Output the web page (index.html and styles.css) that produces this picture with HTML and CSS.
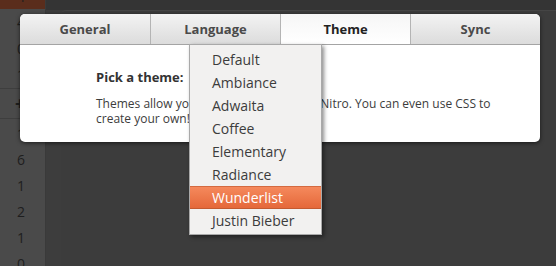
FILE: index.html
```html
<!DOCTYPE html>
<html lang="en">
<head>
    <meta charset="UTF-8">
    <title>Nitro - Settings</title>
    <link rel="stylesheet" href="styles.css">
</head>
<body>
<div class="sidebar">
    <div class="group first">
        <div class="count">4</div>
        <div class="count">4</div>
        <div class="count">0</div>
        <div class="count">1</div>
    </div>
    <div class="add">+</div>
    <div class="group">
        <div class="count">1</div>
        <div class="count">6</div>
        <div class="count">1</div>
        <div class="count">2</div>
        <div class="count">1</div>
        <div class="count">0</div>
    </div>
</div>
<div class="main">
    <div class="toolbar"></div>
    <div class="panel"></div>
</div>

<div class="dialog">
    <div class="tabs">
        <button>General</button>
        <button>Language</button>
        <button class="active">Theme</button>
        <button>Sync</button>
    </div>
    <div class="dialog-body">
        <h3>Pick a theme:</h3>
        <p>Themes allow you to change the look of Nitro. You can even use CSS to create your own!</p>
    </div>
</div>

<ul class="menu">
    <li>Default</li>
    <li>Ambiance</li>
    <li>Adwaita</li>
    <li>Coffee</li>
    <li>Elementary</li>
    <li>Radiance</li>
    <li class="selected">Wunderlist</li>
    <li>Justin Bieber</li>
</ul>
</body>
</html>
```

FILE: styles.css
```css
body {
    margin: 0;
    width: 556px;
    height: 266px;
    overflow: hidden;
    display: flex;
    background-color: #3d3d3d;
    font-family: "Open Sans", "DejaVu Sans", sans-serif;
    color: #3c3c3c;
}
.sidebar {
    width: 45px;
    flex-shrink: 0;
    background: linear-gradient(#5a2d1c 0, #5a2d1c 9px, #4a4a4a 9px);
    border-right: 1px solid #3a3a3a;
    overflow: hidden;
}
.group {
    padding-top: 2px;
}
.group.first {
    margin-top: -16px;
    padding-top: 0;
}
.count {
    height: 26px;
    line-height: 26px;
    padding-left: 17px;
    font-size: 14px;
    color: #1e1e1e;
}
.add {
    height: 29px;
    line-height: 29px;
    padding-left: 15px;
    font-size: 17px;
    font-weight: bold;
    color: #1e1e1e;
    border-top: 1px solid #3e3e3e;
    border-bottom: 1px solid #3e3e3e;
}
.main {
    flex: 1;
    display: flex;
    flex-direction: column;
}
.toolbar {
    height: 10px;
    background-color: #343434;
}
.panel {
    flex: 1;
    margin-left: 15px;
    background-color: #3c3c3c;
    border-top-left-radius: 5px;
    border-top: 1px solid #454545;
}
.dialog {
    position: absolute;
    top: 14px;
    left: 20px;
    width: 520px;
    height: 128px;
    background-color: #FFFFFF;
    border-radius: 5px;
    box-shadow: 0 1px 4px rgba(0, 0, 0, 0.6);
    overflow: hidden;
}
.tabs {
    display: grid;
    grid-template-columns: repeat(4, 1fr);
    height: 30px;
    border-bottom: 1px solid #a4a4a4;
}
.tabs button {
    margin: 0;
    border: none;
    border-left: 1px solid #b4b4b4;
    background: linear-gradient(#f3f3f3, #dcdcdc);
    font-family: inherit;
    font-size: 13px;
    font-weight: bold;
    color: #4a4a4a;
    padding: 0;
}
.tabs button:first-child {
    border-left: none;
}
.tabs button.active {
    background: linear-gradient(#f6f6f6, #ffffff);
    color: #222222;
}
.dialog-body {
    padding: 23px 30px 0 76px;
}
.dialog-body h3 {
    margin: 0 0 10px;
    font-size: 13px;
    font-weight: bold;
    color: #333333;
}
.dialog-body p {
    margin: 0;
    font-size: 12px;
    line-height: 15px;
    color: #3c3c3c;
}
.menu {
    position: absolute;
    top: 44px;
    left: 189px;
    width: 131px;
    margin: 0;
    padding: 3px 0 2px;
    list-style: none;
    background-color: #f2f1f0;
    border: 1px solid #a9a9a9;
    box-shadow: 2px 2px 4px rgba(0, 0, 0, 0.45);
}
.menu li {
    height: 23px;
    line-height: 23px;
    padding-left: 22px;
    font-size: 14px;
    color: #3c3c3c;
}
.menu li.selected {
    height: 21px;
    line-height: 21px;
    background: linear-gradient(#f5895c, #e5683a);
    border-top: 1px solid #d46a40;
    border-bottom: 1px solid #c45a30;
    color: #FFFFFF;
}
```
